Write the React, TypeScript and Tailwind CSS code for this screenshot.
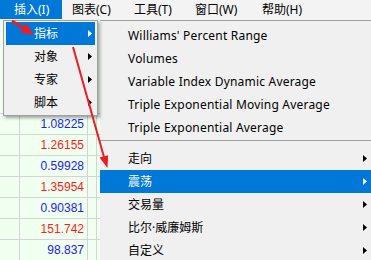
import React from 'react';

const MENUBAR = [
  { label: '插入(I)', w: 'w-[62px] pl-[14px]', active: true },
  { label: '图表(C)', w: 'w-[60px] pl-[10px]', active: false },
  { label: '工具(T)', w: 'w-[61px] pl-[12px]', active: false },
  { label: '窗口(W)', w: 'w-[67px] pl-[12px]', active: false },
  { label: '帮助(H)', w: 'w-[70px] pl-[12px]', active: false },
];

const INSERT_ITEMS = ['指标', '对象', '专家', '脚本'];

const RECENT = [
  "Williams' Percent Range",
  'Volumes',
  'Variable Index Dynamic Average',
  'Triple Exponential Moving Average',
  'Triple Exponential Average',
];

const GROUPS = ['走向', '震荡', '交易量', '比尔·威廉姆斯', '自定义'];

const VALUES = [
  { v: '1.08225', up: true },
  { v: '1.26155', up: false },
  { v: '0.59928', up: true },
  { v: '1.35954', up: false },
  { v: '0.90381', up: true },
  { v: '151.742', up: false },
  { v: '98.837', up: true },
];

function Arrow({ white }: { white?: boolean }) {
  return (
    <svg width="4" height="7" viewBox="0 0 4 7" className="shrink-0">
      <polygon points="0,0 4,3.5 0,7" fill={white ? '#ffffff' : '#000000'} />
    </svg>
  );
}

export default function App() {
  return (
    <div className="relative w-[371px] h-[260px] overflow-hidden bg-[#f0f0f0] font-['Noto_Sans','Noto_Sans_CJK_SC',sans-serif] text-[12px] text-black">
      {/* Barre de menus */}
      <div className="flex h-[20px] bg-[#f3f3f3]">
        {MENUBAR.map((m) => (
          <div
            key={m.label}
            className={`${m.w} flex items-center h-[19px] shrink-0 ${m.active ? 'bg-[#0078d7] text-white' : ''}`}
          >
            {m.label}
          </div>
        ))}
      </div>

      <div className="flex h-[240px]">
        {/* Tableau de cotations */}
        <div className="relative w-[100px] shrink-0 bg-[#f0fff0] font-['Liberation_Sans',sans-serif]">
          <div className="h-[94px] border-b border-[#d4d4d4] flex">
            <div className="w-[20px] border-r border-[#d4d4d4]" />
            <div className="w-[68px] border-r border-[#d4d4d4]" />
            <div className="w-[9px] border-r border-[#d4d4d4]" />
          </div>
          {VALUES.map((r) => (
            <div key={r.v} className="h-[21px] border-b border-[#d4d4d4] flex">
              <div className="w-[20px] border-r border-[#d4d4d4]" />
              <div
                className={`w-[68px] border-r border-[#d4d4d4] flex items-center justify-end pr-[3px] ${r.up ? 'text-[#2020ff]' : 'text-[#ff1a1a]'}`}
              >
                {r.v}
              </div>
              <div className="w-[9px] border-r border-[#d4d4d4]" />
            </div>
          ))}

          {/* Menu Insérer */}
          <div className="absolute left-[3px] top-0 w-[95px] h-[96px] bg-[#f0f0f0] border border-[#a0a0a0] pt-[1px] px-[2px] shadow-[2px_2px_3px_rgba(0,0,0,0.35)] font-['Noto_Sans','Noto_Sans_CJK_SC',sans-serif]">
            {INSERT_ITEMS.map((it, i) => (
              <div
                key={it}
                className={`h-[23px] flex items-center justify-between pl-[28px] pr-[3px] ${i === 0 ? 'bg-[#0078d7] text-white' : ''}`}
              >
                <span>{it}</span>
                <Arrow white={i === 0} />
              </div>
            ))}
          </div>
        </div>

        {/* Sous-menu Indicateurs */}
        <div className="w-[271px] shrink-0 bg-[#f0f0f0] border-t border-[#a0a0a0] pt-[3px]">
          {RECENT.map((it) => (
            <div key={it} className="h-[23px] flex items-center pl-[28px] tracking-[0.2px]">
              {it}
            </div>
          ))}
          <div className="h-[8px] pt-[1px]">
            <div className="h-px bg-[#a0a0a0]" />
          </div>
          {GROUPS.map((g, i) => (
            <div
              key={g}
              className={`h-[23px] flex items-center justify-between pl-[28px] pr-[4px] ${i === 1 ? 'bg-[#0078d7] text-white' : ''}`}
            >
              <span>{g}</span>
              <Arrow white={i === 1} />
            </div>
          ))}
        </div>
      </div>

      {/* Flèches d'annotation */}
      <svg className="absolute left-0 top-0 pointer-events-none" width="371" height="260" viewBox="0 0 371 260">
        <line x1="12" y1="21" x2="24" y2="28.5" stroke="#ee1c25" strokeWidth="3" />
        <polygon points="34,35 20.1,32.6 26.1,23.4" fill="#ee1c25" />
        <line x1="73" y1="47" x2="104" y2="157" stroke="#ee1c25" strokeWidth="2" />
        <polygon points="107.5,168 99.5,157.6 108.1,155.2" fill="#ee1c25" />
      </svg>
    </div>
  );
}
